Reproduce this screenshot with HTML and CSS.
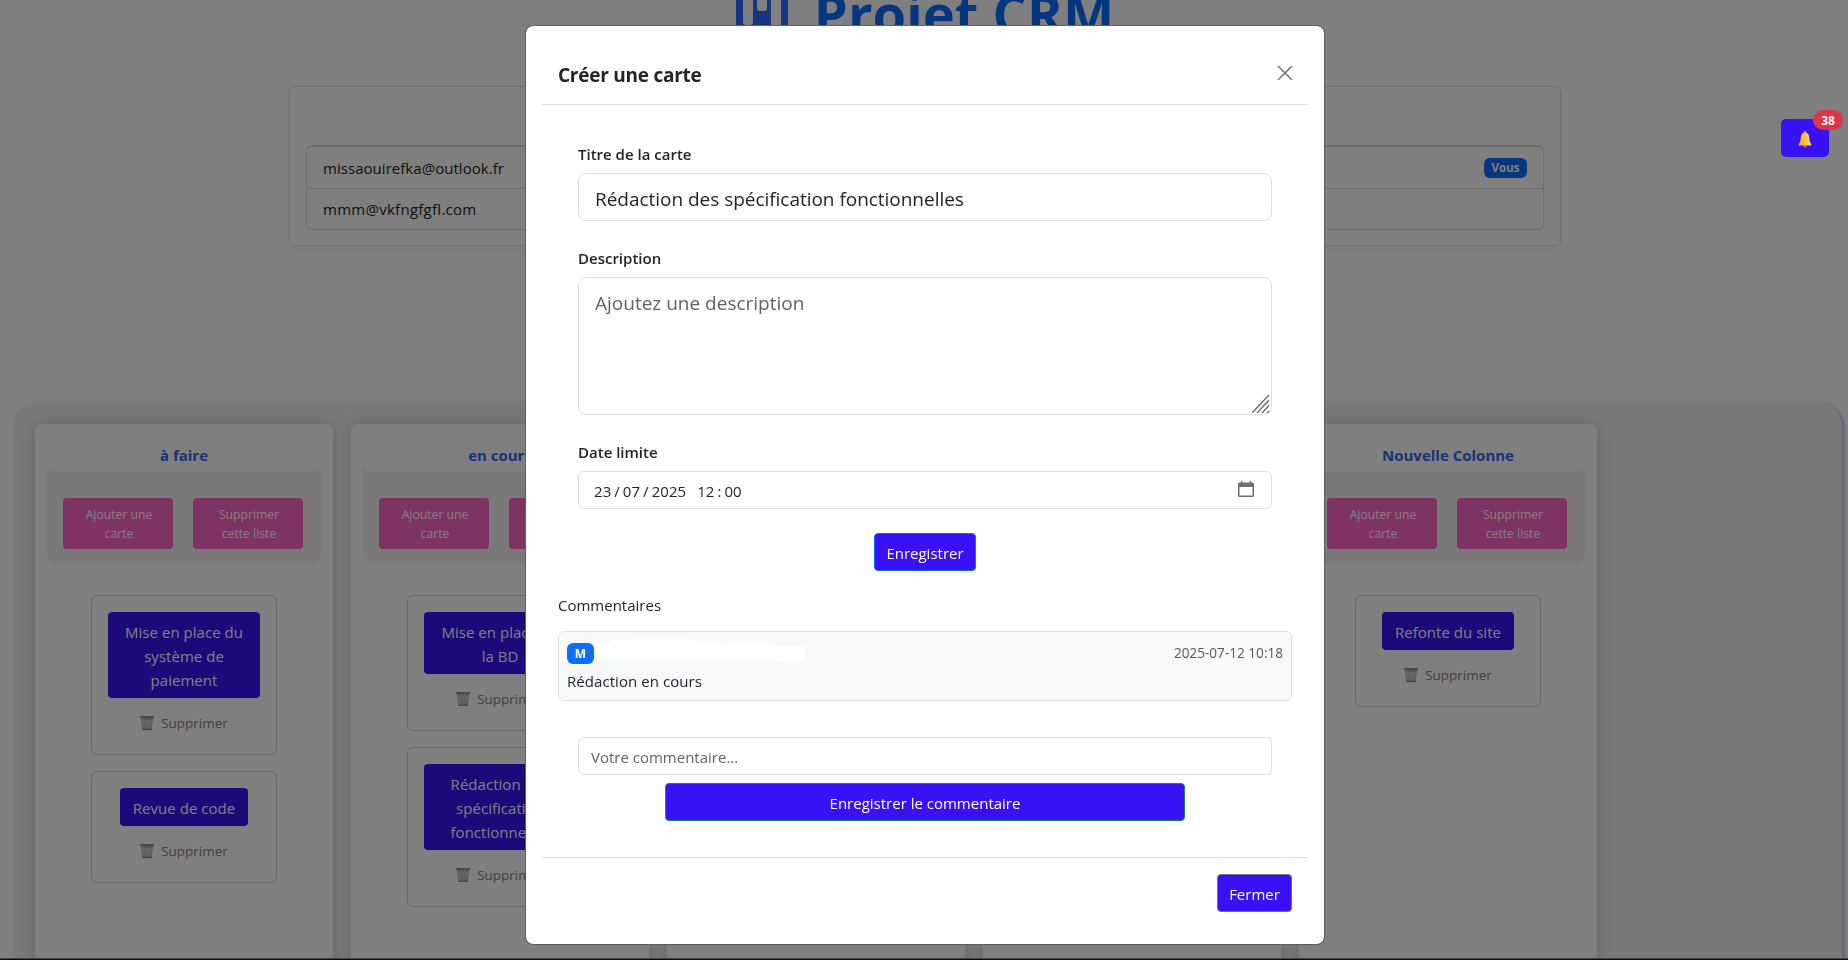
FILE: index.html
```html
<!DOCTYPE html>
<html lang="fr">
<head>
<meta charset="utf-8">
<title>Projet CRM</title>
<link rel="stylesheet" href="styles.css">
</head>
<body>
<svg class="defs" width="0" height="0" aria-hidden="true">
  <defs>
    <symbol id="trash" viewBox="0 0 14 14">
      <path d="M1 2h12l-1.200 12H2.200z" fill="#b4b4c4"/>
      <path d="M2.500 4l7 8M5.500 3.500l6 7M8.500 3.500l3.500 4M11.500 4l-7 8M8.500 3.500l-6 7M5.500 3.500L2 7.500" stroke="#dcdce8" stroke-width=".8" fill="none"/>
      <path d="M0 0h14v2.300H0z" fill="#9494a8"/>
      <path d="M2 12.800h10V14H2z" fill="#9090a4"/>
    </symbol>
  </defs>
</svg>

<div class="page">
  <h1 class="title">
    <svg class="title-icon" width="52" height="52" viewBox="0 0 52 52"><path fill-rule="evenodd" fill="#3066ff" d="M5 0h42q5 0 5 5v42q0 5-5 5H5q-5 0-5-5V5q0-5 5-5zM7 7v32q0 3 3 3h4q3 0 3-3V7zM21 7v18q0 3 3 3h4q3 0 3-3V7zM35 7v36q0 2 2 2h6q2 0 2-2V7z"/></svg>
    <span class="title-text">Projet CRM</span>
  </h1>

  <section class="members">
    <ul class="member-list">
      <li class="member"><span class="mail-a">missaouirefka@outlook.fr</span><span class="you">Vous</span></li>
      <li class="member"><span class="mail-b">mmm@vkfngfgfl.com</span></li>
    </ul>
  </section>

  <main class="board">
    <section class="column">
      <header class="col-head"><h2 class="col-title">à faire</h2>
        <div class="col-actions"><button class="pink">Ajouter une carte</button><button class="pink">Supprimer cette liste</button></div></header>
      <article class="card"><button class="task">Mise en place du système de paiement</button><span class="del"><svg width="14" height="14"><use href="#trash"/></svg><span>Supprimer</span></span></article>
      <article class="card"><button class="task">Revue de code</button><span class="del"><svg width="14" height="14"><use href="#trash"/></svg><span>Supprimer</span></span></article>
    </section>
    <section class="column">
      <header class="col-head"><h2 class="col-title">en cours</h2>
        <div class="col-actions"><button class="pink">Ajouter une carte</button><button class="pink">Supprimer cette liste</button></div></header>
      <article class="card"><button class="task">Mise en place de la BD</button><span class="del"><svg width="14" height="14"><use href="#trash"/></svg><span>Supprimer</span></span></article>
      <article class="card"><button class="task">Rédaction des spécification fonctionnelles</button><span class="del"><svg width="14" height="14"><use href="#trash"/></svg><span>Supprimer</span></span></article>
    </section>
    <section class="column"></section>
    <section class="column"></section>
    <section class="column">
      <header class="col-head"><h2 class="col-title">Nouvelle Colonne</h2>
        <div class="col-actions"><button class="pink">Ajouter une carte</button><button class="pink">Supprimer cette liste</button></div></header>
      <article class="card"><button class="task">Refonte du site</button><span class="del"><svg width="14" height="14"><use href="#trash"/></svg><span>Supprimer</span></span></article>
    </section>
  </main>
</div>

<div class="backdrop"></div>

<div class="modal">
  <header class="modal-head">
    <h5 class="modal-title">Créer une carte</h5>
    <svg class="close" width="16" height="16" viewBox="0 0 16 16"><path d="M1.500 1.500l13 13M14.500 1.500l-13 13" stroke="#000" stroke-width="1.600" stroke-linecap="round"/></svg>
  </header>
  <div class="modal-body">
    <form class="form">
      <label class="label l-title">Titre de la carte</label>
      <div class="input large"><span class="v-title">Rédaction des spécification fonctionnelles</span></div>
      <label class="label l-desc">Description</label>
      <div class="input area"><span class="v-desc">Ajoutez une description</span>
        <svg class="grip" width="18" height="18" viewBox="0 0 18 18"><path d="M0 18L17 0M5 18L17 5M10 18l7-7.500M15 18l2-2" stroke="#666" stroke-width="1.300"/></svg>
      </div>
      <label class="label l-date">Date limite</label>
      <div class="input date">
        <span class="date-value"><span>23</span><span>/</span><span>07</span><span>/</span><span>2025</span><span class="hour">12</span><span>:</span><span>00</span></span>
        <svg width="16" height="16" viewBox="0 0 16 16"><path fill="#6c6f72" fill-rule="evenodd" d="M3 0h1.500v1.500h7V0H13v1.500h1.500q1.500 0 1.500 1.500v11.500q0 1.500-1.500 1.500h-13Q0 16 0 14.500V3q0-1.500 1.500-1.500H3zM1.500 6v8.500h13V6z"/></svg>
      </div>
      <button class="btn save">Enregistrer</button>
    </form>
    <h6 class="comments-title">Commentaires</h6>
    <div class="comment">
      <div class="comment-top">
        <span class="initial">M</span>
        <svg class="author" width="211" height="22" viewBox="0 0 211 22"><path fill="#fff" d="M0 4h15l2-3h14l2-1h64l2 2h30v2h47l6 3h26q3 0 3 3v12h-28v-2H0z"/></svg>
        <time class="stamp">2025-07-12 10:18</time>
      </div>
      <p class="comment-text">Rédaction en cours</p>
    </div>
    <form class="comment-form">
      <div class="input"><span class="v-comment">Votre commentaire...</span></div>
      <button class="btn post">Enregistrer le commentaire</button>
    </form>
  </div>
  <footer class="modal-foot"><button class="btn shut">Fermer</button></footer>
</div>

<div class="bell">
  <svg width="14" height="17" viewBox="0 0 16 17" preserveAspectRatio="none">
    <defs><linearGradient id="gold"><stop offset="0" stop-color="#f59a2c"/><stop offset=".55" stop-color="#fcc63c"/><stop offset="1" stop-color="#ffe36a"/></linearGradient></defs>
    <path d="M8 0q1.200 0 1.200 1.500Q12.500 2.500 12.800 6q.2 5 2.200 7 .8 1-.2 1.500H1.200q-1-.5-.2-1.500 2-2 2.200-7 .3-3.500 3.600-4.500Q6.800 0 8 0z" fill="url(#gold)"/>
    <path d="M6.200 14.500h3.600Q9.500 16.500 8 16.500t-1.800-2z" fill="#e88d20"/>
  </svg>
  <span class="count">38</span>
</div>
<div class="bottom-line"></div>
</body>
</html>
```

FILE: styles.css
```css
* { box-sizing: border-box; }
html { overflow: hidden; }
body {
  margin: 0;
  width: 1850px;
  height: 960px;
  overflow: hidden;
  background: #fff;
  color: #212529;
  font: 400 15px/24px "Open Sans", "Noto Sans", sans-serif;
}
h1, h2, h5, h6, p, ul { margin: 0; padding: 0; }
button { font: inherit; border: 0; }
.defs { position: absolute; }

.page { height: 960px; overflow: hidden; }

.title {
  height: 86px;
  display: flex;
  justify-content: center;
  align-items: flex-start;
  gap: 26px;
  color: #0d6efd;
  font-size: 54.300px;
  line-height: 72px;
  font-weight: 700;
}
.title-icon { margin-top: -17px; }
.title-text { margin-top: -23px; white-space: nowrap; }

.members {
  width: 1272px;
  height: 160px;
  margin: 0 auto;
  padding: 58px 16px 0;
  border: 1px solid #dfdfdf;
  border-radius: 6px;
  box-shadow: 0 2px 4px rgba(0, 0, 0, .08);
}
.member-list {
  list-style: none;
  border: 1px solid #dcdcdc;
  border-top-width: 2px;
  border-radius: 6px;
}
.member {
  height: 41px;
  padding: 0 16px;
  display: flex;
  align-items: center;
  justify-content: space-between;
}
.member + .member { border-top: 1px solid #dcdcdc; }
.mail-a { letter-spacing: .04px; }
.mail-b { letter-spacing: .27px; }
.you {
  width: 43px;
  height: 20px;
  border-radius: 6px;
  background: #0d6efd;
  color: #fff;
  font-size: 11.500px;
  font-weight: 700;
  line-height: 20px;
  text-align: center;
}

.board {
  width: 1829px;
  height: 700px;
  margin: 156px 0 0 13px;
  padding: 22px;
  display: flex;
  gap: 18px;
  border-radius: 24px;
  background: #f5f0f0;
  box-shadow: 2px 1px 3px #b4b4ee;
}
.column {
  width: 298px;
  padding: 12px;
  background: #fff;
  border-radius: 6px;
  box-shadow: 0 0 16px rgba(0, 0, 0, .16);
}
.col-head {
  height: 129px;
  margin-bottom: 30px;
  border-radius: 0 0 10px 10px;
  background: #f5f0f0;
}
.col-title {
  height: 36px;
  padding-top: 7px;
  border-radius: 0 0 8px 8px;
  background: #fff;
  color: #2e68f0;
  font-size: 15px;
  line-height: 24px;
  font-weight: 700;
  text-align: center;
}
.col-actions { display: flex; gap: 20px; padding: 26px 16px; }
.pink {
  width: 110px;
  height: 51px;
  padding: 7px 16px 6px 18px;
  border-radius: 4px;
  background: #ff66c4;
  color: #fff;
  font-size: 12.200px;
  line-height: 19px;
}
.card {
  width: 186px;
  margin: 0 auto 16px;
  padding: 16px;
  border: 1px solid #d0d0d0;
  border-radius: 6px;
  display: flex;
  flex-direction: column;
  align-items: center;
}
.task {
  max-width: 152px;
  padding: 8px 13px 6px;
  border-radius: 4px;
  background: #3812f4;
  color: #fff;
  letter-spacing: .03px;
}
.del {
  height: 40px;
  padding: 13px 0 3px;
  display: flex;
  align-items: center;
  gap: 7px;
  color: #8a8080;
  font-size: 13.500px;
}

.backdrop { position: fixed; inset: 0; background: rgba(0, 0, 0, .5); }

.modal {
  position: absolute;
  left: 525px;
  top: 25px;
  width: 800px;
  height: 920px;
  padding: 16px;
  border: 1px solid #606060;
  border-radius: 8px;
  background: #fff;
  background-clip: padding-box;
}
.modal-head {
  height: 63px;
  padding: 0 15px 0 16px;
  display: flex;
  align-items: center;
  justify-content: space-between;
  border-bottom: 1px solid #dee2e6;
}
.modal-title { padding-top: 3px; font-size: 19px; line-height: 30px; font-weight: 700; letter-spacing: -.25px; white-space: nowrap; }
.close { opacity: .5; }
.modal-body { height: 752px; padding: 16px; }
.form {
  height: 482px;
  padding: 22px 20px 0;
  display: flex;
  flex-direction: column;
}
.label { height: 30px; line-height: 22px; font-weight: 600; white-space: nowrap; }
.input {
  height: 38px;
  padding: 7px 12px 5px;
  border: 1px solid #dee2e6;
  border-radius: 6px;
  white-space: nowrap;
}
.large, .area { padding: 10px 16px 6px; font-size: 19px; line-height: 30px; border-radius: 8px; }
.large { height: 48px; margin-bottom: 26px; letter-spacing: -.03px; }
.area { position: relative; height: 138px; margin-bottom: 26px; color: #5f6367; }
.grip { position: absolute; right: 1px; bottom: 1px; }
.date { display: flex; justify-content: space-between; padding-right: 17px; margin-bottom: 24px; padding-left: 15px; }
.date svg { margin-top: 2px; }
.date-value { display: flex; gap: 3px; font-size: 15px; letter-spacing: .05px; }
.hour { margin-left: 8px; }
.btn {
  height: 38px;
  padding: 2px 0 0;
  border: 1px solid #0d6efd;
  border-radius: 4px;
  background: #3812f4;
  color: #fff;
  text-align: center;
  white-space: nowrap;
}
.save { width: 102px; align-self: center; }
.comments-title { height: 28px; margin-top: -10px; font-size: 15px; line-height: 24px; font-weight: 400; }
.comment {
  height: 70px;
  margin-top: 10px;
  padding: 7px 8px;
  border: 1px solid #dee2e6;
  border-radius: 6px;
  background: #f8f9fa;
}
.comment-top { height: 28px; display: flex; align-items: flex-start; }
.initial {
  width: 27px;
  height: 21px;
  margin-top: 4px;
  border-radius: 6px;
  background: #0d6efd;
  color: #fff;
  font-size: 12px;
  line-height: 22px;
  font-weight: 700;
  text-align: center;
}
.stamp { margin-left: auto; padding-top: 3px; font-size: 13.600px; line-height: 22px; color: #55595d; }
.comment-text { padding-top: 2px; letter-spacing: .06px; }
.comment-form { padding: 36px 20px 0; display: flex; flex-direction: column; }
.v-comment { color: #5f6367; }
.post { width: 520px; margin-top: 8px; align-self: center; border-color: #198754; }
.modal-foot { padding: 16px; border-top: 1px solid #dee2e6; display: flex; justify-content: flex-end; }
.shut { width: 75px; border-color: #6c757d; }

.bell {
  position: absolute;
  left: 1781px;
  top: 119px;
  width: 48px;
  height: 38px;
  display: grid;
  place-items: center;
  padding-top: 2px;
  border-radius: 5px;
  background: #3812f4;
}
.count {
  position: absolute;
  left: 32px;
  top: -9px;
  width: 30px;
  height: 20px;
  border-radius: 10px;
  background: #dc3545;
  color: #fff;
  font-size: 12px;
  line-height: 21px;
  font-weight: 700;
  text-align: center;
}
.bottom-line { position: absolute; left: 0; right: 0; top: 958px; height: 2px; background: #0a0a0a; border-top: 1px solid #444; }
```
